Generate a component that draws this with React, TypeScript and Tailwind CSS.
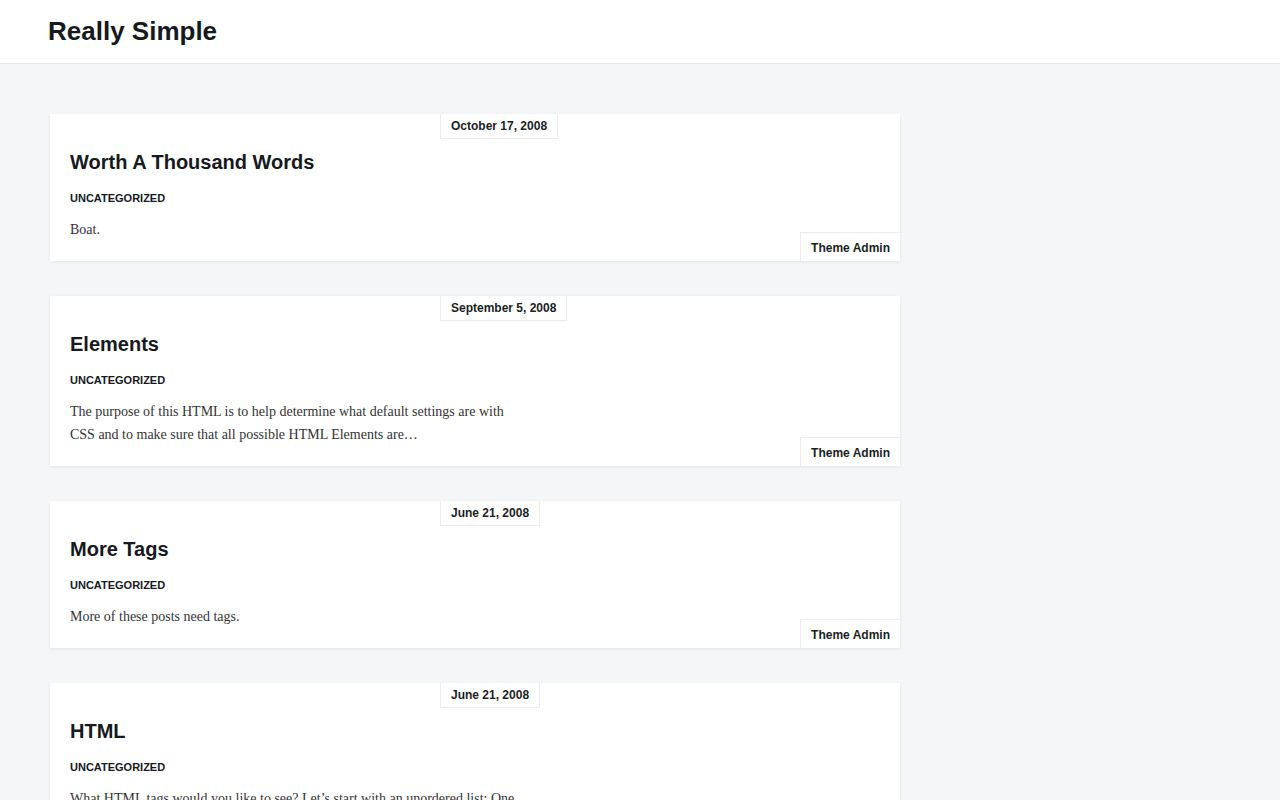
import React from "react";

type Post = {
  date: string;
  title: string;
  category: string;
  excerpt: string;
  author: string;
};

const posts: Post[] = [
  {
    date: "October 17, 2008",
    title: "Worth A Thousand Words",
    category: "Uncategorized",
    excerpt: "Boat.",
    author: "Theme Admin",
  },
  {
    date: "September 5, 2008",
    title: "Elements",
    category: "Uncategorized",
    excerpt:
      "The purpose of this HTML is to help determine what default settings are with CSS and to make sure that all possible HTML Elements are\u2026",
    author: "Theme Admin",
  },
  {
    date: "June 21, 2008",
    title: "More Tags",
    category: "Uncategorized",
    excerpt: "More of these posts need tags.",
    author: "Theme Admin",
  },
  {
    date: "June 21, 2008",
    title: "HTML",
    category: "Uncategorized",
    excerpt:
      "What HTML tags would you like to see? Let\u2019s start with an unordered list: One Two Three Four\u2026",
    author: "Theme Admin",
  },
];

const sans = "font-['Liberation_Sans',Arial,sans-serif]";
const serif = "font-['Liberation_Serif','Times_New_Roman',serif]";

function PostCard({ post }: { post: Post }) {
  return (
    <article className="relative bg-white shadow-[0_1px_3px_rgba(0,0,0,0.08)] px-5 pt-[34px] pb-[20px]">
      <div
        className={`absolute top-0 left-[390px] h-[25px] flex items-center px-[10px] border border-t-0 border-[#ececec] text-[12px] font-bold text-[#1b1e22] ${sans}`}
      >
        {post.date}
      </div>
      <h2 className={`text-[20px] leading-[28px] font-bold text-[#16191d] ${sans}`}>
        {post.title}
      </h2>
      <div
        className={`mt-[14px] text-[11px] leading-[16px] font-bold uppercase text-[#16191d] ${sans}`}
      >
        {post.category}
      </div>
      <p className={`mt-[12px] max-w-[460px] text-[14px] leading-[23px] text-[#333] ${serif}`}>
        {post.excerpt}
      </p>
      <div
        className={`absolute bottom-0 right-0 h-[29px] flex items-center pt-[1px] px-[10px] border border-r-0 border-b-0 border-[#ececec] bg-white text-[12px] font-bold text-[#1b1e22] ${sans}`}
      >
        {post.author}
      </div>
    </article>
  );
}

export default function App() {
  return (
    <div className={`min-h-[800px] bg-[#f5f6f8] ${sans}`}>
      <header className="h-[64px] bg-white border-b border-[#e6e7ea] px-12 flex items-center">
        <h1 className="text-[26px] leading-[32px] font-bold text-[#16191d] -mt-[1px]">
          Really Simple
        </h1>
      </header>
      <main className="pl-[50px] pt-[50px] pb-12">
        <div className="w-[850px] flex flex-col gap-[35px]">
          {posts.map((p, i) => (
            <PostCard key={i} post={p} />
          ))}
        </div>
      </main>
    </div>
  );
}
